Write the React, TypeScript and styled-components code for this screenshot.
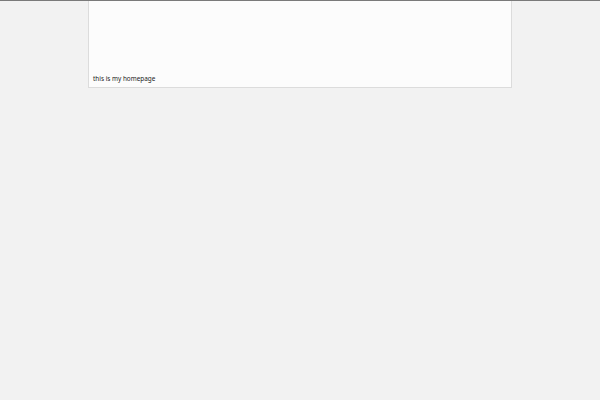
import React from "react";
import styled, { createGlobalStyle } from "styled-components";

const GlobalStyle = createGlobalStyle`
  html, body {
    margin: 0;
    padding: 0;
    background: #f2f2f2;
    font-family: "Noto Sans", "DejaVu Sans", sans-serif;
  }
`;

const Page = styled.div`
  min-height: 400px;
  border-top: 1px solid #7a7a7a;
  display: flex;
  justify-content: center;
`;

const Card = styled.div`
  box-sizing: border-box;
  width: 424px;
  height: 87px;
  background: #fcfcfc;
  border: 1px solid #dcdcdc;
  border-top: none;
  display: flex;
  align-items: flex-end;
  padding: 0 4px 4px;
`;

const Caption = styled.p`
  margin: 0;
  font-size: 6.4px;
  line-height: 9px;
  color: #222;
  -webkit-font-smoothing: antialiased;
`;

const App: React.FC = () => {
  return (
    <>
      <GlobalStyle />
      <Page>
        <Card>
          <Caption>this is my homepage</Caption>
        </Card>
      </Page>
    </>
  );
};

export default App;
